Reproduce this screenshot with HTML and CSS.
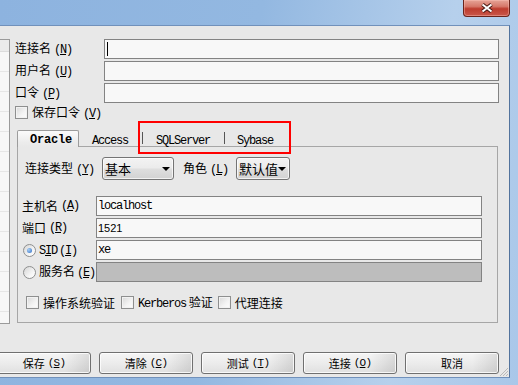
FILE: index.html
```html
<!DOCTYPE html>
<html lang="zh-CN">
<head>
    <meta charset="UTF-8">
    <meta name="viewport" content="width=device-width, initial-scale=1.0">
    <title>新建连接</title>
    <link rel="stylesheet" href="styles.css">
</head>
<body>
    <div id="win">
        <div id="titlebar">
            <div id="close">
                <svg width="14" height="10" viewBox="0 0 14 10">
                    <path d="M2.5 1.5 L11.5 8.5 M11.5 1.5 L2.5 8.5" stroke="#4a1a14" stroke-width="4"/>
                    <path d="M2.5 1.5 L11.5 8.5 M11.5 1.5 L2.5 8.5" stroke="#fff" stroke-width="2"/>
                </svg>
            </div>
        </div>
        <div id="frame">
            <div id="client">
                <div id="top">
                    <div id="tree">
                        <div class="thead"></div>
                        <div class="trow"></div>
                        <div class="trow"></div>
                        <div class="trow"></div>
                        <div class="trow"></div>
                        <div class="trow"></div>
                        <div class="trow"></div>
                        <div class="trow"></div>
                        <div class="trow"></div>
                        <div class="trow"></div>
                        <div class="trow"></div>
                        <div class="trow"></div>
                        <div class="trow"></div>
                        <div class="trow"></div>
                    </div>
                    <div id="main">
                        <div class="row">
                            <span class="lbl">连接名<span class="mn">(<u>N</u>)</span></span>
                            <div class="field"><span class="caret"></span></div>
                        </div>
                        <div class="row">
                            <span class="lbl">用户名<span class="mn">(<u>U</u>)</span></span>
                            <div class="field"></div>
                        </div>
                        <div class="row">
                            <span class="lbl">口令<span class="mn">(<u>P</u>)</span></span>
                            <div class="field"></div>
                        </div>
                        <div class="saverow">
                            <span class="check"></span>
                            <span class="ctext">保存口令<span class="mn">(<u>V</u>)</span></span>
                        </div>

                        <div id="tabwrap">
                            <div class="tabs">
                                <div class="tab on">Oracle</div>
                                <div class="tab t-access">Access</div>
                                <div class="sep s1"></div>
                                <div class="tab t-sql">SQLServer</div>
                                <div class="sep s2"></div>
                                <div class="tab t-syb">Sybase</div>
                            </div>
                            <div class="pane">
                                <div class="comborow">
                                    <span class="lbl-type">连接类型<span class="mn">(<u>Y</u>)</span></span>
                                    <div class="combo c1"><span>基本</span><span class="arrow"></span></div>
                                    <span class="lbl-role">角色<span class="mn">(<u>L</u>)</span></span>
                                    <div class="combo c2"><span>默认值</span><span class="arrow"></span></div>
                                </div>
                                <div class="prow first">
                                    <span class="plbl">主机名<span class="mn">(<u>A</u>)</span></span>
                                    <div class="field"><span class="val">localhost</span></div>
                                </div>
                                <div class="prow">
                                    <span class="plbl">端口<span class="mn">(<u>R</u>)</span></span>
                                    <div class="field"><span class="num">1521</span></div>
                                </div>
                                <div class="prow">
                                    <span class="plbl"><span class="radio on"></span><span class="rtext"><span class="mn sid">S<u>I</u>D</span><span class="mn">(<u>I</u>)</span></span></span>
                                    <div class="field"><span class="val">xe</span></div>
                                </div>
                                <div class="prow">
                                    <span class="plbl"><span class="radio"></span><span class="rtext">服务名<span class="mn">(<u>E</u>)</span></span></span>
                                    <div class="field off"></div>
                                </div>
                                <div class="checks">
                                    <span class="check"></span>
                                    <span class="ctext">操作系统验证</span>
                                    <span class="check k2"></span>
                                    <span class="ctext"><span class="mono">Kerberos</span> 验证</span>
                                    <span class="check k3"></span>
                                    <span class="ctext">代理连接</span>
                                </div>
                            </div>
                        </div>
                    </div>
                </div>
                <div id="buttons">
                    <div class="btn">保存<span class="mn">(<u>S</u>)</span></div>
                    <div class="btn">清除<span class="mn">(<u>C</u>)</span></div>
                    <div class="btn">测试<span class="mn">(<u>T</u>)</span></div>
                    <div class="btn">连接<span class="mn">(<u>O</u>)</span></div>
                    <div class="btn">取消</div>
                </div>
                <svg id="grip" width="10" height="10" viewBox="0 0 10 10">
                    <path d="M9 1 L1 9 M9 4 L4 9 M9 7 L7 9" stroke="#b9b9b9" stroke-width="1"/>
                </svg>
            </div>
        </div>
        <div id="mark"></div>
    </div>
</body>
</html>
```

FILE: styles.css
```css
*{
    box-sizing: border-box;
}
body{
    margin: 0;
    width: 518px;
    height: 385px;
    overflow: hidden;
    font-family: "Noto Sans CJK SC", sans-serif;
    font-size: 12px;
    line-height: 14px;
    color: #000;
    white-space: nowrap;
}
#win{
    position: relative;
    width: 518px;
    height: 385px;
    background: linear-gradient(100deg, #8db3df 0%, #93b8e1 45%, #b6d0ec 78%, #a9c7e9 100%);
}
#titlebar{
    height: 25px;
    display: flex;
    justify-content: flex-end;
    align-items: flex-start;
    padding-right: 8px;
}
#close{
    width: 47px;
    height: 17px;
    border: 1px solid #6a231b;
    border-top: none;
    border-radius: 0 0 4px 4px;
    background: linear-gradient(#e6a497 0%, #d6786a 40%, #bd3c2e 55%, #c9574a 100%);
    box-shadow: inset 0 0 0 1px rgba(255, 200, 190, 0.4);
    display: flex;
    justify-content: center;
    align-items: center;
}
#frame{
    display: flex;
    height: 353px;
}
#client{
    position: relative;
    width: 510px;
    height: 353px;
    background-color: #e8e8e8;
    border-top: 1px solid #7191bb;
    border-right: 1px solid #52739d;
    border-bottom: 1px solid #7191bb;
    padding-top: 13px;
}
#top{
    display: flex;
    height: 286px;
}
#tree{
    width: 10px;
    height: 285px;
    background-color: #f7f7f7;
    border-top: 1px solid #9a9a9a;
    border-right: 1px solid #9a9a9a;
    border-bottom: 1px solid #9a9a9a;
    overflow: hidden;
}
.thead{
    height: 12px;
    background-color: #ebebeb;
    border-bottom: 1px solid #dcdcdc;
}
.trow{
    height: 20px;
    border-bottom: 1px solid #e6e6e6;
}
#main{
    flex: 1;
    padding: 0 10px 0 5px;
}
.row{
    display: flex;
    align-items: center;
    height: 20px;
    margin-bottom: 2px;
}
.lbl{
    width: 89px;
    flex-shrink: 0;
}
.mn{
    font-family: "Liberation Mono", monospace;
    font-size: 12px;
    letter-spacing: -1.2px;
    margin-left: 3px;
}
.field{
    flex: 1;
    height: 20px;
    border: 1px solid #838383;
    background-color: #f8f8f8;
    display: flex;
    align-items: center;
}
.field.off{
    background-color: #bdbdbd;
}
.caret{
    width: 1px;
    height: 14px;
    margin-left: 2px;
    background-color: #000;
}
.val{
    padding-left: 1px;
    font-family: "Liberation Mono", monospace;
    font-size: 12px;
    letter-spacing: -1.2px;
}
.num{
    padding-left: 1px;
    font-family: "Liberation Sans", sans-serif;
    font-size: 11px;
}
.saverow{
    display: flex;
    align-items: center;
    height: 13px;
    margin-top: 3px;
}
.check{
    width: 13px;
    height: 13px;
    border: 1px solid #8e8f8f;
    background: linear-gradient(135deg, #d8d8d8, #f4f4f4 60%, #fdfdfd);
    box-shadow: inset 0 0 0 1px #f2f2f2;
    flex-shrink: 0;
}
.ctext{
    margin-left: 4px;
}

#tabwrap{
    margin: 11px 1px 0 2px;
}
.tabs{
    display: flex;
    align-items: flex-start;
    height: 16px;
}
.tab{
    font-family: "Liberation Mono", monospace;
    font-size: 12px;
    letter-spacing: -1.2px;
    padding-top: 4px;
}
.tab.on{
    position: relative;
    z-index: 1;
    width: 62px;
    height: 17px;
    padding: 2px 0 0 12px;
    border: 1px solid #9c9c9c;
    border-bottom: none;
    border-radius: 2px 2px 0 0;
    background: linear-gradient(#fbfbfb, #ececec 70%, #e8e8e8);
    font-weight: bold;
    letter-spacing: -0.2px;
}
.t-access{
    margin-left: 13px;
}
.sep{
    width: 1px;
    height: 12px;
    margin-top: 2px;
    background-color: #555;
}
.s1{
    margin-left: 14px;
}
.t-sql{
    margin-left: 13px;
}
.s2{
    margin-left: 14px;
}
.t-syb{
    margin-left: 12px;
}
.pane{
    height: 177px;
    border: 1px solid #a6a6a6;
    padding: 10px 15px 0 0;
}
.comborow{
    display: flex;
    align-items: center;
    height: 23px;
    padding-left: 7px;
}
.lbl-type{
    width: 77px;
}
.lbl-role{
    width: 53px;
    margin-left: 9px;
}
.combo{
    height: 23px;
    border: 1px solid #747474;
    border-radius: 3px;
    background: linear-gradient(#f3f3f3 0%, #ececec 45%, #dedede 55%, #d2d2d2 100%);
    box-shadow: inset 0 0 0 1px rgba(255, 255, 255, 0.7);
    display: flex;
    align-items: center;
    justify-content: space-between;
    padding: 0 3px 0 2px;
    font-size: 13px;
}
.c1{
    width: 72px;
}
.c2{
    width: 54px;
}
.arrow{
    width: 0;
    height: 0;
    border-left: 4px solid transparent;
    border-right: 4px solid transparent;
    border-top: 4px solid #000;
}
.prow{
    display: flex;
    align-items: center;
    height: 20px;
    margin-bottom: 2px;
    padding-left: 4px;
}
.prow.first{
    margin-top: 16px;
}
.plbl{
    width: 74px;
    flex-shrink: 0;
    display: flex;
    align-items: center;
}
.radio{
    width: 13px;
    height: 13px;
    margin-left: 1px;
    flex-shrink: 0;
    border: 1px solid #8e8f8f;
    border-radius: 50%;
    background: linear-gradient(135deg, #d6d6d6, #f6f6f6 65%, #ffffff);
    display: flex;
    justify-content: center;
    align-items: center;
}
.radio.on::after{
    content: "";
    width: 5px;
    height: 5px;
    border-radius: 50%;
    background: radial-gradient(circle at 35% 35%, #a9d0f5, #2f6cc4);
}
.rtext{
    margin-left: 3px;
}
.rtext .mn{
    margin-left: 2px;
}
.mn.sid{
    margin-left: 0;
}
.checks{
    display: flex;
    align-items: center;
    height: 13px;
    margin-top: 14px;
    padding-left: 8px;
}
.mono{
    font-family: "Liberation Mono", monospace;
    font-size: 12px;
    letter-spacing: -1.2px;
}
.k2{
    margin-left: 6px;
}
.k3{
    margin-left: 5px;
}

#buttons{
    display: flex;
    gap: 8px;
    margin: 27px 0 0 -3px;
}
.btn{
    width: 94px;
    height: 22px;
    border: 1px solid #707070;
    border-radius: 3px;
    background: linear-gradient(to right, rgba(0, 0, 0, 0) 72%, rgba(0, 0, 0, 0.1) 100%), linear-gradient(#f5f5f5 0%, #ececec 50%, #e0e0e0 100%);
    box-shadow: inset 0 0 0 1px rgba(255, 255, 255, 0.8);
    display: flex;
    justify-content: center;
    align-items: center;
    font-size: 11px;
}
.btn .mn{
    font-size: 11px;
    letter-spacing: -0.8px;
}
#grip{
    position: absolute;
    right: 0;
    bottom: 0;
}
#mark{
    position: absolute;
    left: 138px;
    top: 121px;
    width: 153px;
    height: 33px;
    border: 2px solid #f00;
}
```
